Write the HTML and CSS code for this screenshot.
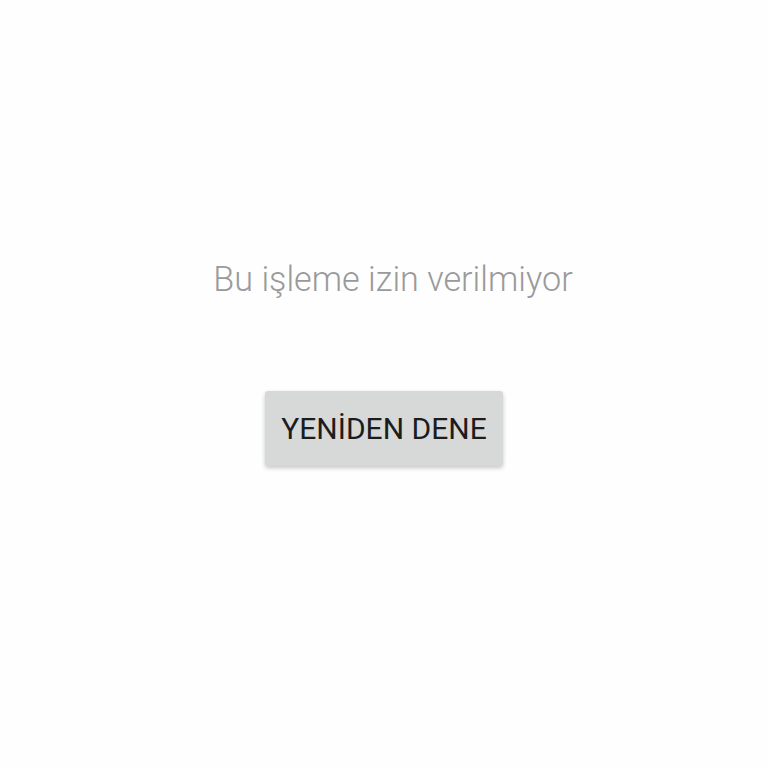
FILE: index.html
```html
<!DOCTYPE html>
<html lang="tr">
<head>
<meta charset="utf-8">
<link rel="stylesheet" href="styles.css">
</head>
<body>
<main class="screen">
  <p class="message">Bu işleme izin verilmiyor</p>
  <button class="retry">YENİDEN DENE</button>
</main>
</body>
</html>
```
FILE: styles.css
```css
html, body {
  margin: 0;
  padding: 0;
  background: #fefefe;
}
.screen {
  width: 768px;
  height: 768px;
  display: flex;
  flex-direction: column;
  align-items: center;
  box-sizing: border-box;
  padding-top: 254px;
  font-family: Roboto, "Noto Sans", sans-serif;
}
.message {
  margin: 0;
  padding-left: 18px;
  font-weight: 300;
  font-size: 34.2px;
  line-height: 50px;
  color: #9a9a9a;
}
.retry {
  margin-top: 87px;
  width: 238px;
  height: 75px;
  border: none;
  border-radius: 3px;
  background: #d7d8d8;
  box-shadow: 0 2px 4px rgba(0,0,0,0.22);
  font-family: Roboto, "Noto Sans", sans-serif;
  font-weight: 400;
  font-size: 30px;
  color: #1c1c1c;
  padding: 0;
}
```
